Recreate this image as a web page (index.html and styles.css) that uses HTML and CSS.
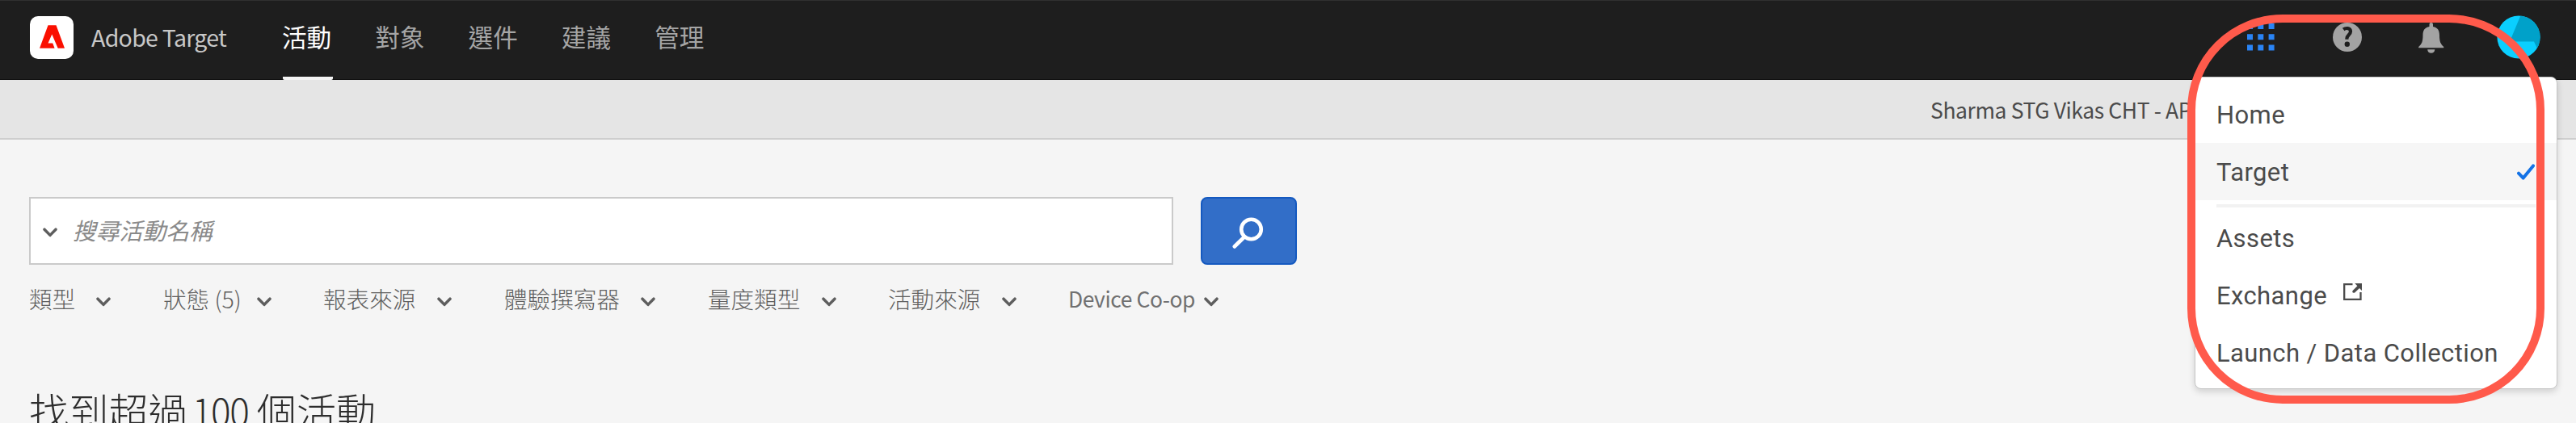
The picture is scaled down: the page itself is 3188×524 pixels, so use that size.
FILE: index.html
```html
<!DOCTYPE html>
<html lang="zh-Hant">
<head>
<meta charset="utf-8">
<title>Adobe Target</title>
<link rel="stylesheet" href="styles.css">
</head>
<body>
<svg class="defs" width="0" height="0"><symbol id="chev" viewBox="0 0 18 12"><path d="M2 2.200 9 9.400 16 2.200" fill="none" stroke="#5e5e5e" stroke-width="3.500" stroke-linecap="round" stroke-linejoin="round"/></symbol></svg>
<header class="shell">
  <div class="logo"><svg width="54" height="53" viewBox="0 0 54 53"><path d="M22.500 11.300h10L43 39.800h-8.300L27.300 22.500 22.500 33.500h5.700l2.400 6.300H12z" fill="#fa0f00"/></svg></div>
  <span class="product">Adobe Target</span>
  <nav class="nav"><a class="tab active">活動</a><a class="tab">對象</a><a class="tab">選件</a><a class="tab">建議</a><a class="tab">管理</a></nav>
  <div class="tools">
    <svg class="apps" width="34" height="34" viewBox="0 0 34 34" fill="#2a84f5"><path d="M0 0h7v7H0zM13.300 0h7v7h-7zM26.600 0h7v7h-7zM0 13.300h7v7H0zM13.300 13.300h7v7h-7zM26.600 13.300h7v7h-7zM0 26.600h7v7H0zM13.300 26.600h7v7h-7zM26.600 26.600h7v7h-7z"/></svg>
    <svg class="help" width="36" height="36" viewBox="0 0 36 36"><circle cx="18" cy="18" r="18" fill="#a3a3a3"/><path d="M13.200 8.500C16 6.300 22 6.200 22 11c0 4-4.600 4.600-4.600 8.800v1" fill="none" stroke="#1e1e1e" stroke-width="4.200"/><circle cx="17.800" cy="26.800" r="3.200" fill="#1e1e1e"/></svg>
    <svg class="bell" width="32" height="38" viewBox="0 0 32 38" fill="#a3a3a3"><path d="M13.500 5V2.200C13.500-.6 18-.6 18 2.200V5c5.500.8 8 4.700 8 10.500 0 8.500 1.600 11 5.300 14.500v1.200H.2V30C4 26.500 5.500 24 5.500 15.500 5.500 9.700 8 5.800 13.500 5zM11.200 33.200h9.100c0 6-9.100 6-9.100 0z"/></svg>
    <svg class="avatar" width="54" height="54" viewBox="0 0 54 54"><clipPath id="round"><circle cx="27" cy="27" r="26.600"/></clipPath><g clip-path="url(#round)"><path d="M0 0h54v54H0z" fill="#0acfff"/><path d="M29.500 0H54v40h-4.500L46 32.400H16z" fill="#00a1c9"/></g></svg>
  </div>
</header>
<div class="account"><span class="account-name">Sharma STG Vikas CHT - AP</span></div>
<main class="content">
  <div class="search">
    <div class="field"><svg class="chev" width="18" height="12"><use href="#chev"/></svg><span class="placeholder">搜尋活動名稱</span></div>
    <div class="go"><svg width="46" height="46" viewBox="0 0 46 46" fill="none" stroke="#fff" stroke-width="4.600" stroke-linecap="round"><circle cx="26.500" cy="21" r="12.300"/><path d="M18 30.500 5.700 42.500"/></svg></div>
  </div>
  <div class="filters">
    <div class="filter f1"><span>類型</span><svg width="18" height="12"><use href="#chev"/></svg></div>
    <div class="filter f2"><span>狀態 (5)</span><svg width="18" height="12"><use href="#chev"/></svg></div>
    <div class="filter f3"><span>報表來源</span><svg width="18" height="12"><use href="#chev"/></svg></div>
    <div class="filter f4"><span>體驗撰寫器</span><svg width="18" height="12"><use href="#chev"/></svg></div>
    <div class="filter f5"><span>量度類型</span><svg width="18" height="12"><use href="#chev"/></svg></div>
    <div class="filter f6"><span>活動來源</span><svg width="18" height="12"><use href="#chev"/></svg></div>
    <div class="filter f7"><span class="latin">Device Co-op</span><svg width="18" height="12"><use href="#chev"/></svg></div>
  </div>
  <h1 class="count"><span>找到超過</span><span class="num">100</span><span>個活動</span></h1>
</main>
<div class="menu">
  <div class="item">Home</div>
  <div class="item selected">Target<svg class="check" width="22" height="21" viewBox="0 0 22 21"><path d="M2 11.600 7.700 17.600 20 2.400" fill="none" stroke="#1473e6" stroke-width="4" stroke-linecap="round" stroke-linejoin="round"/></svg></div>
  <div class="rule"></div>
  <div class="item">Assets</div>
  <div class="item exchange">Exchange<svg class="ext" width="23" height="22" viewBox="0 0 23 22"><path d="M11.500 1.100H1.200v18.700h20.300V11" fill="none" stroke="#4b4b4b" stroke-width="2.300"/><path d="M14.300 0H23v9l-3-3-5.800 5.400c-2 1.300-3.800-.5-2.500-2.300L17.400 3.200z" fill="#4b4b4b"/></svg></div>
  <div class="item launch">Launch / Data Collection</div>
</div>
<div class="highlight"></div>
</body>
</html>
```
FILE: styles.css
```css
* { box-sizing: border-box; }
body { margin: 0; width: 3188px; height: 524px; overflow: hidden; position: relative; background: #f5f5f5; font-family: "Noto Sans CJK TC", sans-serif; }
svg { display: block; flex: none; }
.defs { position: absolute; }
.shell { height: 99px; background: #1e1e1e; border-top: 1px solid #303030; border-bottom: 1px solid #111; display: flex; align-items: flex-start; padding-left: 37px; }
.logo { width: 54px; height: 53px; margin-top: 19px; border-radius: 10px; background: #fff; }
.product { width: 237px; margin-left: 22px; margin-top: 24px; font-size: 28.500px; line-height: 42px; letter-spacing: -0.700px; color: #c8c8c8; white-space: nowrap; }
.nav { display: flex; gap: 53.600px; height: 98px; }
.tab { height: 98px; width: 61.700px; font-size: 30.600px; line-height: 89px; text-indent: -1px; color: #a5a5a5; white-space: nowrap; }
.active { color: #fff; border-bottom: 4px solid #f5f5f5; border-radius: 2px; }
.tools { display: flex; align-items: center; margin-left: auto; margin-top: 18px; padding-right: 44px; height: 54px; }
.help { margin-left: 72px; }
.bell { margin-left: 70px; margin-top: 2px; }
.avatar { margin-left: 65px; }
.account { height: 74px; background: #e5e5e5; border-bottom: 2px solid #cecece; padding-left: 2389px; }
.account-name { display: block; font-size: 26.500px; line-height: 74px; letter-spacing: -0.400px; color: #4b4b4b; white-space: nowrap; }
.content { padding: 71px 0 0 36px; }
.search { display: flex; gap: 34px; }
.field { width: 1416px; height: 84px; border: 2px solid #cacaca; background: #fff; display: flex; align-items: center; padding-left: 15px; }
.chev { margin-top: 4px; }
.placeholder { margin-left: 19px; margin-top: -2px; font-size: 28.800px; line-height: 40px; font-style: italic; color: #8a8a8a; }
.go { width: 119px; height: 84px; border-radius: 8px; border: 2px solid #1459c0; background: #326ec8; padding: 17px 0 0 34px; }
.filters { display: flex; height: 84px; }
.filter { display: flex; justify-content: space-between; height: 42px; margin-top: 21px; font-size: 28.600px; font-weight: 300; line-height: 41px; color: #606060; white-space: nowrap; }
.filter svg { margin-top: 19px; }
.f1 { width: 101px; }
.f2 { width: 134px; margin-left: 65px; }
.f3 { width: 159px; margin-left: 64px; }
.f4 { width: 187px; margin-left: 65px; }
.f5 { width: 159px; margin-left: 65px; }
.f6 { width: 159px; margin-left: 64px; }
.f7 { width: 185px; margin-left: 65px; }
.latin { font-weight: 400; font-size: 26.400px; letter-spacing: -0.400px; margin-left: -1px; color: #707070; }
.count { display: flex; margin: 60px 0 0; font-size: 49.200px; font-weight: 300; line-height: 72px; color: #2d2d2d; white-space: nowrap; }
.num { width: 85px; padding-left: 5px; font-size: 46px; letter-spacing: -1.400px; }
.menu { position: absolute; left: 2716px; top: 95px; width: 449px; height: 387px; background: #fff; border: 1px solid #c6c6c6; border-radius: 8px; box-shadow: 0 3px 9px rgba(0,0,0,.16); padding-top: 10px; font-family: Roboto, sans-serif; font-size: 31px; letter-spacing: 0.400px; color: #4b4b4b; }
.item { height: 71px; line-height: 71px; padding: 1px 0 0 26px; display: flex; align-items: center; white-space: nowrap; }
.selected { background: #f6f6f6; justify-content: space-between; padding-right: 27px; }
.rule { height: 4px; background: #f2f2f2; margin: 5px 26px 2px; }
.ext { margin-left: 20px; margin-top: -8px; }
.highlight { position: absolute; left: 2707px; top: 18px; width: 442px; height: 482px; border: 10px solid #ff5a4b; border-radius: 118px; }
```
